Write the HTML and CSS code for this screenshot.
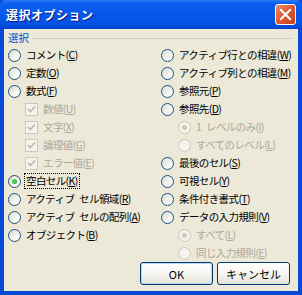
FILE: index.html
```html
<!DOCTYPE html>
<html lang="ja">
  <head>
    <meta charset="UTF-8" />
    <title>選択オプション</title>
    <link rel="stylesheet" href="styles.css">
  </head>
  <body>
    <div class="window">
      <div class="titlebar">
        <span class="title">選択オプション</span>
        <span class="close">
          <svg width="13" height="13" viewBox="0 0 13 13">
            <path d="M2 2 L11 11 M11 2 L2 11" stroke="#fff" stroke-width="2.2" stroke-linecap="square" />
          </svg>
        </span>
      </div>

      <div class="content">
        <div class="legend"><span>選択</span></div>

        <div class="columns">
          <div class="col">
            <div class="opt"><span class="radio"></span><span class="txt">コメント(<u>C</u>)</span></div>
            <div class="opt"><span class="radio"></span><span class="txt">定数(<u>O</u>)</span></div>
            <div class="opt"><span class="radio"></span><span class="txt">数式(<u>F</u>)</span></div>
            <div class="opt sub disabled"><span class="check"><svg width="11" height="11" viewBox="0 0 11 11"><path d="M2 5 L4.3 7.5 L9 2.5" fill="none" stroke="#bdbbb0" stroke-width="1.8" /></svg></span><span class="txt">数値(<u>U</u>)</span></div>
            <div class="opt sub disabled"><span class="check"><svg width="11" height="11" viewBox="0 0 11 11"><path d="M2 5 L4.3 7.5 L9 2.5" fill="none" stroke="#bdbbb0" stroke-width="1.8" /></svg></span><span class="txt">文字(<u>X</u>)</span></div>
            <div class="opt sub disabled"><span class="check"><svg width="11" height="11" viewBox="0 0 11 11"><path d="M2 5 L4.3 7.5 L9 2.5" fill="none" stroke="#bdbbb0" stroke-width="1.8" /></svg></span><span class="txt">論理値(<u>G</u>)</span></div>
            <div class="opt sub disabled"><span class="check"><svg width="11" height="11" viewBox="0 0 11 11"><path d="M2 5 L4.3 7.5 L9 2.5" fill="none" stroke="#bdbbb0" stroke-width="1.8" /></svg></span><span class="txt">エラー値(<u>E</u>)</span></div>
            <div class="opt"><span class="radio on"></span><span class="txt focus">空白セル(<u>K</u>)</span></div>
            <div class="opt"><span class="radio"></span><span class="txt">アクティブ セル領域(<u>R</u>)</span></div>
            <div class="opt"><span class="radio"></span><span class="txt">アクティブ セルの配列(<u>A</u>)</span></div>
            <div class="opt"><span class="radio"></span><span class="txt">オブジェクト(<u>B</u>)</span></div>
          </div>

          <div class="col">
            <div class="opt"><span class="radio"></span><span class="txt">アクティブ行との相違(<u>W</u>)</span></div>
            <div class="opt"><span class="radio"></span><span class="txt">アクティブ列との相違(<u>M</u>)</span></div>
            <div class="opt"><span class="radio"></span><span class="txt">参照元(<u>P</u>)</span></div>
            <div class="opt"><span class="radio"></span><span class="txt">参照先(<u>D</u>)</span></div>
            <div class="opt sub disabled"><span class="radio on"></span><span class="txt">1 レベルのみ(<u>I</u>)</span></div>
            <div class="opt sub disabled"><span class="radio"></span><span class="txt">すべてのレベル(<u>L</u>)</span></div>
            <div class="opt"><span class="radio"></span><span class="txt">最後のセル(<u>S</u>)</span></div>
            <div class="opt"><span class="radio"></span><span class="txt">可視セル(<u>Y</u>)</span></div>
            <div class="opt"><span class="radio"></span><span class="txt">条件付き書式(<u>T</u>)</span></div>
            <div class="opt"><span class="radio"></span><span class="txt">データの入力規則(<u>V</u>)</span></div>
            <div class="opt sub disabled"><span class="radio on"></span><span class="txt">すべて(<u>L</u>)</span></div>
            <div class="opt sub disabled"><span class="radio"></span><span class="txt">同じ入力規則(<u>E</u>)</span></div>
          </div>
        </div>

        <div class="buttons">
          <button class="btn default">OK</button>
          <button class="btn">キャンセル</button>
        </div>
      </div>
    </div>
  </body>
</html>
```

FILE: styles.css
```css
body {
  margin: 0;
  background-color: #ece9d8;
  font-family: "Noto Sans CJK JP", "Liberation Sans", sans-serif;
  font-size: 10.5px;
  color: #000;
}

.window {
  width: 302px;
  height: 295px;
  box-sizing: border-box;
  display: flex;
  flex-direction: column;
  background-color: #0a4ad8;
}

.titlebar {
  height: 29px;
  flex-shrink: 0;
  display: flex;
  align-items: center;
  justify-content: space-between;
  padding: 0 6px 0 6px;
  background: linear-gradient(#2b7df7 0%, #0a5ff0 12%, #0558ea 50%, #0451e2 85%, #0342cc 100%);
  border-radius: 6px 6px 0 0;
}

.title {
  color: #fff;
  font-weight: bold;
  font-size: 12px;
  letter-spacing: 0.5px;
  text-shadow: 1px 1px 0 #0a1883;
}

.close {
  width: 19px;
  height: 19px;
  margin-top: -1px;
  border: 1px solid #fff;
  border-radius: 3px;
  display: flex;
  align-items: center;
  justify-content: center;
  background: linear-gradient(135deg, #f0906c 0%, #e05a34 45%, #c8401c 100%);
}

.content {
  flex: 1;
  margin: 0 4px 4px 4px;
  background-color: #ece9d8;
  padding: 2px 4px 0 4px;
  display: flex;
  flex-direction: column;
}

.legend {
  height: 14px;
  display: flex;
  align-items: center;
  gap: 3px;
  color: #0046d5;
  line-height: 14px;
}

.legend::after {
  content: "";
  flex: 1;
  height: 1px;
  margin-right: 1px;
  background-color: #d0d0bf;
}

.columns {
  display: grid;
  grid-template-columns: 153px 1fr;
  margin-top: 1px;
}

.opt {
  height: 18px;
  display: flex;
  align-items: center;
  gap: 3px;
  white-space: nowrap;
}

.opt.sub {
  padding-left: 17px;
}

.disabled .txt {
  color: #aca899;
}

.txt {
  line-height: 14px;
  padding: 0 1px;
  letter-spacing: -0.6px;
  word-spacing: 3px;
  border: 1px dotted transparent;
}

.txt.focus {
  border-color: #000;
}

.radio {
  width: 13px;
  height: 13px;
  box-sizing: border-box;
  border: 1px solid #1c5180;
  border-radius: 50%;
  background: linear-gradient(135deg, #dcdcd5 0%, #f3f3ef 55%, #ffffff 100%);
  display: flex;
  align-items: center;
  justify-content: center;
  flex-shrink: 0;
}

.radio.on::after {
  content: "";
  width: 5px;
  height: 5px;
  border-radius: 50%;
  background: radial-gradient(circle at 40% 40%, #5fe05f, #21a121);
}

.disabled .radio {
  border-color: #cac8bb;
  background: #f4f3ee;
}

.disabled .radio.on::after {
  background: #cac8bb;
}

.check {
  width: 13px;
  height: 13px;
  box-sizing: border-box;
  border: 1px solid #cac8bb;
  background-color: #f4f3ee;
  display: flex;
  align-items: center;
  justify-content: center;
  flex-shrink: 0;
}

.buttons {
  display: flex;
  justify-content: flex-end;
  gap: 4px;
  padding-right: 4px;
  margin-top: 0;
}

.btn {
  width: 73px;
  height: 23px;
  border: 1px solid #003c74;
  border-radius: 3px;
  background: linear-gradient(#ffffff 0%, #f4f3ee 60%, #e3e1d6 100%);
  font-family: "Noto Sans CJK JP", "Liberation Sans", sans-serif;
  font-size: 11px;
  color: #000;
  padding: 0;
}

.btn.default {
  box-shadow: inset 0 0 0 1px #bcd4f6;
}
```
